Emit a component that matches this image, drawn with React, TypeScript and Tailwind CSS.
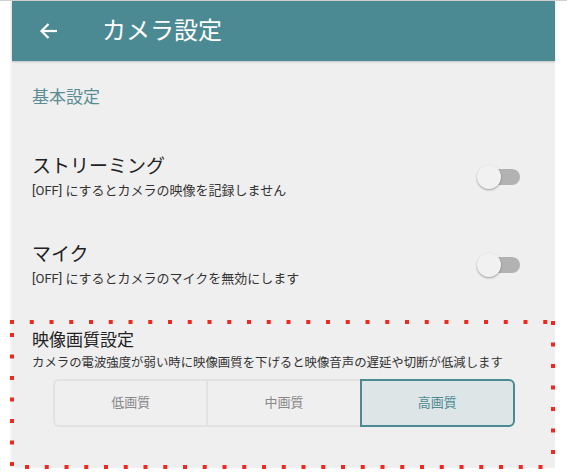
import React from "react";

const font = { fontFamily: '"Roboto", "Noto Sans CJK JP", sans-serif' };

function Toggle() {
  return (
    <div className="relative w-[44px] h-[26px] shrink-0">
      <div className="absolute left-[13px] top-[5px] w-[30px] h-[16px] rounded-full bg-[#b2b2b2]" />
      <div className="absolute left-0 top-[1px] w-[24px] h-[24px] rounded-full bg-[#f1f1f1] shadow-[0_1px_2px_rgba(0,0,0,0.35)]" />
    </div>
  );
}

function Row({ title, sub }: { title: string; sub: string }) {
  return (
    <div className="h-[88px] flex items-center pl-[20px] pr-[34px]">
      <div className="flex-1">
        <div className="text-[19px] leading-[24px] text-[#222]">{title}</div>
        <div className="mt-[3px] text-[13px] leading-[18px] text-[#333]">{sub}</div>
      </div>
      <Toggle />
    </div>
  );
}

export default function App() {
  return (
    <div className="w-[567px] h-[476px] bg-white border-t border-[#cfcfcf] overflow-hidden" style={font}>
      <div className="ml-[10px] w-[545px] border-l-2 border-[#f6f6f6] bg-[#efefef] h-[467px] flex flex-col">
        <div className="h-[60px] bg-[#4b8a93] flex items-center shadow-[0_1px_2px_rgba(0,0,0,0.2)] relative z-10">
          <svg className="ml-[25px]" width="24" height="24" viewBox="0 0 24 24" fill="none" stroke="white" strokeWidth="2.2">
            <path d="M20 12H4.5" />
            <path d="M11.5 5l-7 7 7 7" />
          </svg>
          <div className="ml-[41px] text-[24px] leading-[30px] text-white">カメラ設定</div>
        </div>
        <div className="h-[72px] pt-[24px] pl-[20px] text-[17px] leading-[24px] text-[#5a8c94]">基本設定</div>
        <Row title="ストリーミング" sub="[OFF] にするとカメラの映像を記録しません" />
        <Row title="マイク" sub="[OFF] にするとカメラのマイクを無効にします" />
        <div className="relative mt-[11px] h-[148px] pt-[8px]">
          <svg className="absolute -left-[2px] top-0 overflow-visible pointer-events-none" width="547" height="152">
            <line x1="0" y1="2" x2="547" y2="2" stroke="#f0281f" strokeWidth="4" strokeDasharray="4 15.75" />
            <line x1="2" y1="13" x2="2" y2="152" stroke="#f0281f" strokeWidth="4" strokeDasharray="4 17.5" />
            <line x1="543" y1="1" x2="543" y2="140" stroke="#f0281f" strokeWidth="4" strokeDasharray="4 17.5" />
            <line x1="15" y1="147" x2="547" y2="147" stroke="#f0281f" strokeWidth="4" strokeDasharray="4 15.75" />
          </svg>
          <div className="pl-[20px] text-[17px] leading-[24px] text-[#222]">映像画質設定</div>
          <div className="pl-[20px] mt-[2px] text-[12.4px] leading-[18px] text-[#333]">
            カメラの電波強度が弱い時に映像画質を下げると映像音声の遅延や切断が低減します
          </div>
          <div className="ml-[41px] mr-[40px] mt-[7px] h-[48px] flex">
            <div className="flex-1 flex items-center justify-center border-2 border-r-0 border-[#e2e2e2] rounded-l-md bg-[#efefef] text-[13px] text-[#888]">
              低画質
            </div>
            <div className="flex-1 flex items-center justify-center border-2 border-r-0 border-[#e2e2e2] bg-[#efefef] text-[13px] text-[#888]">
              中画質
            </div>
            <div className="flex-1 flex items-center justify-center border-2 border-[#4b8a93] rounded-r-md bg-[#dee5e7] text-[13px] text-[#4b8a93]">
              高画質
            </div>
          </div>
        </div>
      </div>
    </div>
  );
}
